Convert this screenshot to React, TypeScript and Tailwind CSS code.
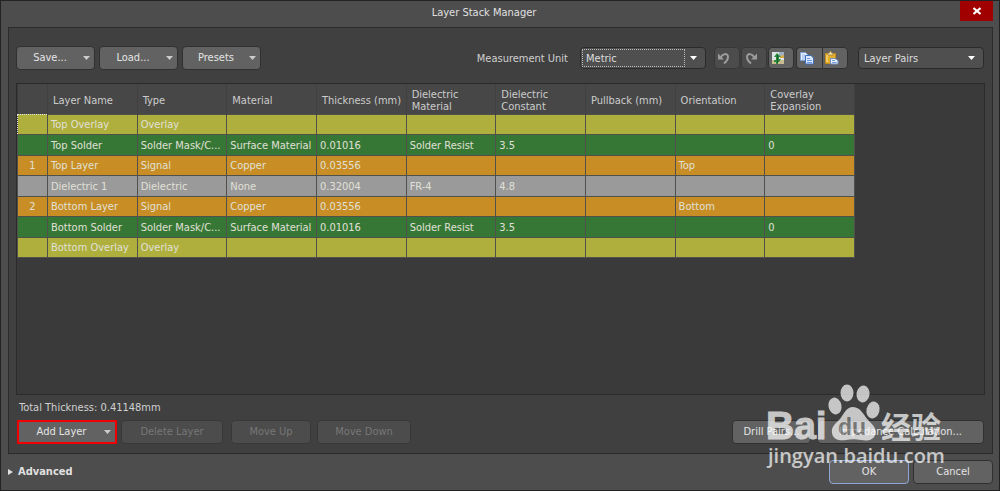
import React, { useState } from 'react';
import clsx from 'clsx';

type Layer = {
  index?: string;
  name: string;
  type: string;
  material?: string;
  thickness?: string;
  dielectricMaterial?: string;
  dielectricConstant?: string;
  pullback?: string;
  orientation?: string;
  coverlay?: string;
  color: string;
};

const OVERLAY = 'bg-[#afaf3e]';
const SOLDER = 'bg-[#367735]';
const COPPER = 'bg-[#c88e25]';
const DIELECTRIC = 'bg-[#9a9a9a]';

const layers: Layer[] = [
  { name: 'Top Overlay', type: 'Overlay', color: OVERLAY },
  { name: 'Top Solder', type: 'Solder Mask/C...', material: 'Surface Material', thickness: '0.01016', dielectricMaterial: 'Solder Resist', dielectricConstant: '3.5', coverlay: '0', color: SOLDER },
  { index: '1', name: 'Top Layer', type: 'Signal', material: 'Copper', thickness: '0.03556', orientation: 'Top', color: COPPER },
  { name: 'Dielectric 1', type: 'Dielectric', material: 'None', thickness: '0.32004', dielectricMaterial: 'FR-4', dielectricConstant: '4.8', color: DIELECTRIC },
  { index: '2', name: 'Bottom Layer', type: 'Signal', material: 'Copper', thickness: '0.03556', orientation: 'Bottom', color: COPPER },
  { name: 'Bottom Solder', type: 'Solder Mask/C...', material: 'Surface Material', thickness: '0.01016', dielectricMaterial: 'Solder Resist', dielectricConstant: '3.5', coverlay: '0', color: SOLDER },
  { name: 'Bottom Overlay', type: 'Overlay', color: OVERLAY },
];

const columns = [
  'Layer Name',
  'Type',
  'Material',
  'Thickness (mm)',
  'Dielectric Material',
  'Dielectric Constant',
  'Pullback (mm)',
  'Orientation',
  'Coverlay Expansion',
];

const Caret = ({ className }: { className?: string }) => (
  <svg className={className} width="7" height="4" viewBox="0 0 7 4" aria-hidden="true">
    <path d="M0 0h7L3.5 4z" fill="currentColor" />
  </svg>
);

type ButtonProps = React.ButtonHTMLAttributes<HTMLButtonElement> & { menu?: boolean };

const Button = ({ className, menu, children, ...props }: ButtonProps) => (
  <button
    type="button"
    className={clsx(
      'flex h-6 items-center rounded border text-[#e4e4e4] disabled:border-[#383838] disabled:bg-[#4c4c4c] disabled:text-[#777777]',
      !props.disabled && 'bg-[#626262]',
      className
    )}
    {...props}
  >
    <span className="flex-1 text-center">{children}</span>
    {menu && <Caret className="mr-1 text-[#cccccc]" />}
  </button>
);

type SelectProps = {
  id: string;
  label: string;
  options: string[];
  focused?: boolean;
};

const Select = ({ id, label, options, focused }: SelectProps) => {
  const [value, setValue] = useState(options[0]);
  return (
    <div className="relative flex h-[22px] w-[126px] items-center rounded border border-[#2b2b2b] bg-[#4f4f4f]">
      <select
        id={id}
        aria-label={label}
        value={value}
        onChange={(e) => setValue(e.target.value)}
        className="h-full w-full appearance-none bg-transparent pl-[5px] pt-px text-[#dddddd] outline-none"
      >
        {options.map((option) => (
          <option key={option}>{option}</option>
        ))}
      </select>
      {focused && <span className="pointer-events-none absolute inset-y-px left-px right-5 border border-dotted border-[#bbbbbb]" />}
      <Caret className="pointer-events-none absolute right-2 text-white" />
    </div>
  );
};

const UndoIcon = ({ className }: { className?: string }) => (
  <svg className={className} width="14" height="14" viewBox="0 0 14 14" fill="none" stroke="#9c9c9c" aria-hidden="true">
    <path d="M3.500 7C5.500 2 11 2 11 6C11 8.500 9.500 10.500 7 12.500" strokeWidth="2" />
    <path d="M1 2.500V8.500H7z" fill="#9c9c9c" stroke="none" />
  </svg>
);

const BoardIcon = () => (
  <svg width="14" height="14" viewBox="0 0 14 14" aria-hidden="true">
    <path d="M1 1h12v12H1z" fill="#dfe5e6" />
    <path d="M1 9h12v4H1z" fill="#c9bc91" />
    <path d="M8 1h5v4H8z" fill="#9fb2c4" />
    <path d="M9 5l4-1v3h-4z" fill="#d8ad42" />
    <path d="M6 2l4 4H8v2h2l-2 3H7v2H5v-2H3V9h2V6H3z" fill="#2d8a3d" />
    <path d="M6 4h1v8H6z" fill="#13602a" />
  </svg>
);

const CopyIcon = () => (
  <svg width="14" height="14" viewBox="0 0 14 14" aria-hidden="true">
    <path d="M.5 1.500h5l2 2v6h-7z" fill="#e6efff" stroke="#7d9fd3" />
    <path d="M2 4h3M2 6h4M2 8h4" stroke="#8db1e8" />
    <path d="M5.500 4.500h5.500l2.500 2.500v6h-8z" fill="#dbe8ff" stroke="#3f6fc0" />
    <path d="M7 7.500h3M7 9.500h5M7 11.500h5" stroke="#6d9ae0" />
  </svg>
);

const PasteIcon = () => (
  <svg width="14" height="14" viewBox="0 0 14 14" aria-hidden="true">
    <path d="M.5 2.500h10v10H.5z" fill="#e4ae2f" stroke="#c58c1c" />
    <path d="M3 3V2h1.500V.500h2V2H8v2H3z" fill="#f5e7ac" stroke="#8c7230" strokeWidth=".6" />
    <path d="M2 4v7" stroke="#f7d675" strokeWidth="1.500" />
    <path d="M5.500 7.500h4.500l3 2v3.500H5.500z" fill="#e9f1ff" stroke="#6f8fbd" />
    <path d="M7 9.500h3M7 11.500h4.500" stroke="#5685ca" strokeWidth=".8" />
  </svg>
);

const toolButton = 'flex h-[22px] w-[26px] items-center justify-center rounded border border-[#303030] bg-[#626262] pr-[6px] disabled:border-[#383838] disabled:bg-[#4c4c4c]';

const Toolbar = () => (
  <div className="flex items-center gap-1 pr-px">
    <Button menu className="w-[79px] border-[#303030]">Save...</Button>
    <Button menu className="w-[79px] border-[#303030]">Load...</Button>
    <Button menu className="w-[79px] border-[#303030]">Presets</Button>
    <label htmlFor="unit" className="ml-auto pr-2 pt-[2px] text-[#d0d0d0]">Measurement Unit</label>
    <Select id="unit" label="Measurement Unit" options={['Metric', 'Imperial']} focused />
    <div className="ml-1 flex gap-px">
      <button type="button" aria-label="Undo" disabled className={toolButton}><UndoIcon /></button>
      <button type="button" aria-label="Redo" disabled className={toolButton}><UndoIcon className="-scale-x-100" /></button>
      <button type="button" aria-label="Board view" className={toolButton}><BoardIcon /></button>
      <div className="ml-px flex">
        <button type="button" aria-label="Copy" className={clsx(toolButton, 'rounded-r-none border-r-0')}><CopyIcon /></button>
        <button type="button" aria-label="Paste" className={clsx(toolButton, 'rounded-l-none')}><PasteIcon /></button>
      </div>
    </div>
    <div className="ml-[6px]">
      <Select id="stackup" label="Stackup style" options={['Layer Pairs', 'Internal Layer Pairs', 'Build-up']} />
    </div>
  </div>
);

const LayerTable = () => (
  <table className="h-[174px] w-[838px] table-fixed border-collapse text-left">
    <thead>
      <tr className="h-[30px] bg-[#474747] text-[#cccccc]">
        <th className="w-[30px] border-r border-[#404040]" />
        {columns.map((column) => (
          <th key={column} className="border-r border-[#404040] pl-[5px] pt-1 font-normal leading-3">
            {column}
          </th>
        ))}
      </tr>
    </thead>
    <tbody>
      {layers.map((layer, i) => (
        <tr key={layer.name} className={clsx(layer.color, 'text-[#e0e0d8]')}>
          <td className={clsx('border pt-[2px] text-center leading-4', i === 0 ? 'border-dotted border-[#dddddd]' : 'border-[#50504c]')}>{layer.index}</td>
          {[
            layer.name,
            layer.type,
            layer.material,
            layer.thickness,
            layer.dielectricMaterial,
            layer.dielectricConstant,
            layer.pullback,
            layer.orientation,
            layer.coverlay,
          ].map((value, j) => (
            <td key={j} className="truncate border border-[#50504c] px-[3px] pt-[2px] leading-4">{value}</td>
          ))}
        </tr>
      ))}
    </tbody>
  </table>
);

const Watermark = () => (
  <svg
    className="pointer-events-none absolute bottom-[17px] right-[49px] opacity-70"
    width="184"
    height="90"
    viewBox="0 0 184 90"
    fill="#ffffff"
    aria-hidden="true"
  >
    <text x="0" y="56" fontFamily="Liberation Sans" fontSize="39" fontWeight="bold" stroke="#ffffff" strokeWidth="1">Bai</text>
    <ellipse cx="69" cy="23" rx="6.500" ry="8.500" transform="rotate(-12 69 23)" />
    <ellipse cx="81" cy="10" rx="6.500" ry="8.500" />
    <ellipse cx="97" cy="11" rx="6.500" ry="8.500" transform="rotate(8 97 11)" />
    <ellipse cx="107" cy="27" rx="6.500" ry="8.500" transform="rotate(14 107 27)" />
    <path d="M87 24c8 0 11 9 16 14c5 5 8 8 6 14c-2 6-9 6-14 5c-5-1-10-1-15 0c-6 1-13 0-14-7c-1-6 3-9 8-14c4-5 6-12 13-12z" />
    <text x="72" y="52" fontFamily="Liberation Sans" fontSize="23" fontWeight="bold" fill="#454545" fillOpacity=".7">du</text>
    <text x="115" y="55" fontFamily="Noto Sans CJK SC" fontSize="30" fontWeight="bold">经验</text>
    <text x="2" y="80" fontFamily="Open Sans, sans-serif" fontSize="20" fontWeight="600">jingyan.baidu.com</text>
  </svg>
);

const App = () => {
  return (
    <div className="relative flex min-h-screen flex-col border border-[#222222] bg-[#4d4d4d] pl-[7px] pr-[6px] font-['DejaVu_Sans_Condensed','DejaVu_Sans',sans-serif] text-[11px] leading-4 text-[#e0e0e0]">
      <header className="flex h-[26px] items-start">
        <h1 className="flex-1 pt-1 text-center">Layer Stack Manager</h1>
        <button type="button" aria-label="Close" className="flex h-5 w-[33px] items-center justify-center bg-[#a00000]">
          <svg width="8" height="8" viewBox="0 0 8 8" stroke="#ffffff" strokeWidth="2" aria-hidden="true">
            <path d="M.5 1l7 6M7.500 1l-7 6" />
          </svg>
        </button>
      </header>

      <main className="flex flex-1 flex-col border border-[#2b2b2b] bg-[#404040] px-[7px] pb-[9px] pt-[18px]">
        <Toolbar />
        <div className="mt-[13px] min-h-[310px] flex-1 border border-[#2b2b2b] bg-[#3a3a3a]">
          <LayerTable />
        </div>
        <p className="mb-1 mt-[5px] pl-[3px] text-[#d0d0d0]">Total Thickness: 0.41148mm</p>
        <div className="flex px-px">
          <Button menu className="w-[100px] rounded-none border-2 border-[#f00000]">Add Layer</Button>
          <Button disabled className="ml-1 w-[102px]">Delete Layer</Button>
          <Button disabled className="ml-2 w-[80px]">Move Up</Button>
          <Button disabled className="ml-[6px] w-[94px]">Move Down</Button>
          <Button className="ml-auto w-[79px] border-[#303030]">Drill Pairs...</Button>
          <Button className="ml-[6px] w-[167px] border-[#303030]">Impedance Calculation...</Button>
        </div>
      </main>

      <footer className="flex h-9 items-center">
        <button type="button" aria-expanded="false" className="flex items-center gap-[5px] font-bold">
          <svg width="5" height="6" viewBox="0 0 5 6" fill="currentColor" aria-hidden="true">
            <path d="M0 0l5 3-5 3z" />
          </svg>
          Advanced
        </button>
        <Button className="ml-auto w-20 border-[#8ea6d4]">OK</Button>
        <Button className="ml-1 w-20 border-[#303030]">Cancel</Button>
      </footer>

      <Watermark />
    </div>
  );
};

export default App;
